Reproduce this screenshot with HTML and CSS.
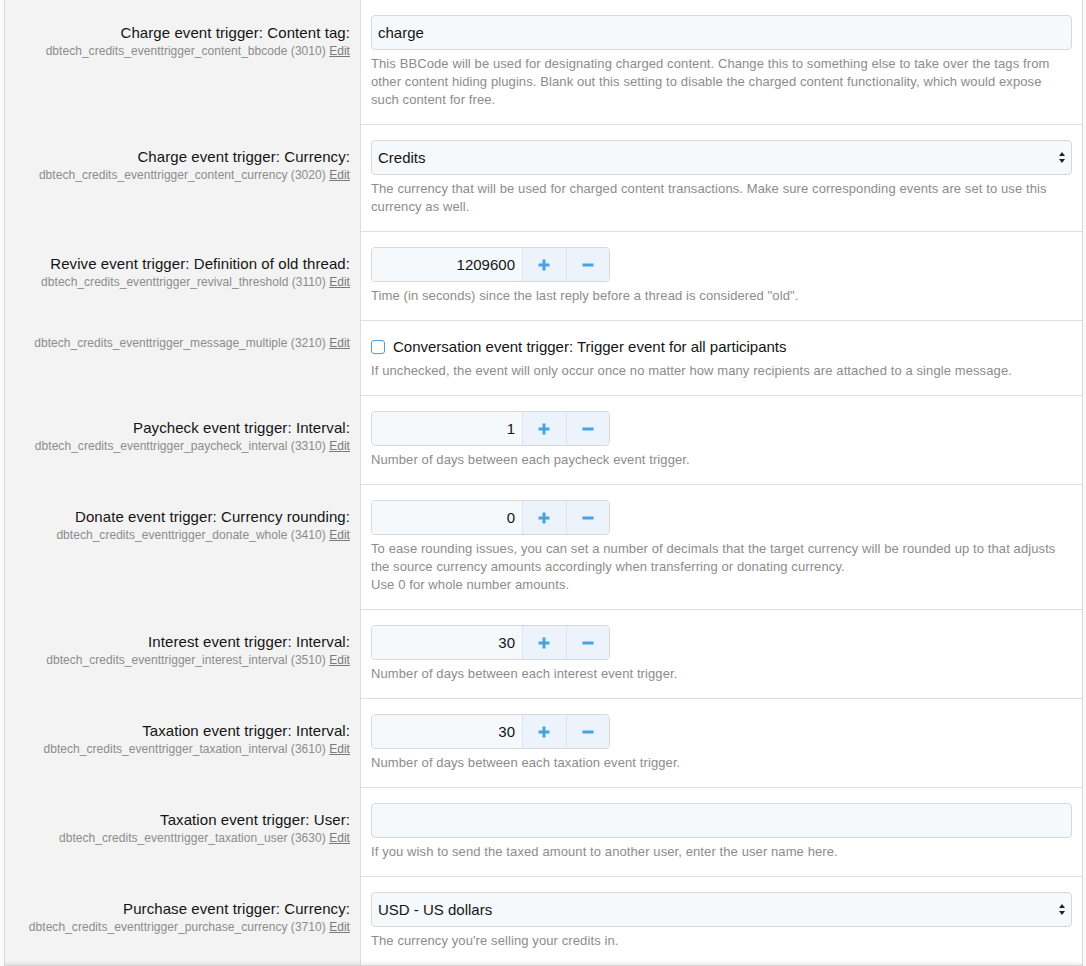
FILE: index.html
```html
<!DOCTYPE html>
<html>
<head>
<meta charset="utf-8">
<link rel="stylesheet" href="styles.css">
</head>
<body>
<div class="page">
  <div class="row first">
    <div class="dt"><div class="title">Charge event trigger: Content tag:</div><div class="hint">dbtech_credits_eventtrigger_content_bbcode (3010) <a class="edit">Edit</a></div></div>
    <div class="dd">
      <input class="input" type="text" value="charge">
      <div class="desc">This BBCode will be used for designating charged content. Change this to something else to take over the tags from other content hiding plugins. Blank out this setting to disable the charged content functionality, which would expose such content for free.</div>
    </div>
  </div>
  <div class="row">
    <div class="dt"><div class="title">Charge event trigger: Currency:</div><div class="hint">dbtech_credits_eventtrigger_content_currency (3020) <a class="edit">Edit</a></div></div>
    <div class="dd">
      <div class="select"><span>Credits</span><svg class="arrows" width="6" height="11" viewBox="0 0 6 11"><path d="M3 0L6 4H0Z M3 11L0 7H6Z" fill="#222"/></svg></div>
      <div class="desc">The currency that will be used for charged content transactions. Make sure corresponding events are set to use this currency as well.</div>
    </div>
  </div>
  <div class="row">
    <div class="dt"><div class="title">Revive event trigger: Definition of old thread:</div><div class="hint">dbtech_credits_eventtrigger_revival_threshold (3110) <a class="edit">Edit</a></div></div>
    <div class="dd">
      <div class="number"><input class="num-input" type="text" value="1209600"><span class="btn"><svg width="12" height="12" viewBox="0 0 12 12"><path d="M6 0.5V11.5M0.5 6H11.5" stroke="#47a2e4" stroke-width="3"/></svg></span><span class="btn"><svg width="12" height="12" viewBox="0 0 12 12"><path d="M0.5 6H11.5" stroke="#47a2e4" stroke-width="3"/></svg></span></div>
      <div class="desc">Time (in seconds) since the last reply before a thread is considered "old".</div>
    </div>
  </div>
  <div class="row">
    <div class="dt no-title"><div class="hint">dbtech_credits_eventtrigger_message_multiple (3210) <a class="edit">Edit</a></div></div>
    <div class="dd">
      <label class="check"><span class="box"></span><span>Conversation event trigger: Trigger event for all participants</span></label>
      <div class="desc">If unchecked, the event will only occur once no matter how many recipients are attached to a single message.</div>
    </div>
  </div>
  <div class="row">
    <div class="dt"><div class="title">Paycheck event trigger: Interval:</div><div class="hint">dbtech_credits_eventtrigger_paycheck_interval (3310) <a class="edit">Edit</a></div></div>
    <div class="dd">
      <div class="number"><input class="num-input" type="text" value="1"><span class="btn"><svg width="12" height="12" viewBox="0 0 12 12"><path d="M6 0.5V11.5M0.5 6H11.5" stroke="#47a2e4" stroke-width="3"/></svg></span><span class="btn"><svg width="12" height="12" viewBox="0 0 12 12"><path d="M0.5 6H11.5" stroke="#47a2e4" stroke-width="3"/></svg></span></div>
      <div class="desc">Number of days between each paycheck event trigger.</div>
    </div>
  </div>
  <div class="row">
    <div class="dt"><div class="title">Donate event trigger: Currency rounding:</div><div class="hint">dbtech_credits_eventtrigger_donate_whole (3410) <a class="edit">Edit</a></div></div>
    <div class="dd">
      <div class="number"><input class="num-input" type="text" value="0"><span class="btn"><svg width="12" height="12" viewBox="0 0 12 12"><path d="M6 0.5V11.5M0.5 6H11.5" stroke="#47a2e4" stroke-width="3"/></svg></span><span class="btn"><svg width="12" height="12" viewBox="0 0 12 12"><path d="M0.5 6H11.5" stroke="#47a2e4" stroke-width="3"/></svg></span></div>
      <div class="desc">To ease rounding issues, you can set a number of decimals that the target currency will be rounded up to that adjusts the source currency amounts accordingly when transferring or donating currency.<br>Use 0 for whole number amounts.</div>
    </div>
  </div>
  <div class="row">
    <div class="dt"><div class="title">Interest event trigger: Interval:</div><div class="hint">dbtech_credits_eventtrigger_interest_interval (3510) <a class="edit">Edit</a></div></div>
    <div class="dd">
      <div class="number"><input class="num-input" type="text" value="30"><span class="btn"><svg width="12" height="12" viewBox="0 0 12 12"><path d="M6 0.5V11.5M0.5 6H11.5" stroke="#47a2e4" stroke-width="3"/></svg></span><span class="btn"><svg width="12" height="12" viewBox="0 0 12 12"><path d="M0.5 6H11.5" stroke="#47a2e4" stroke-width="3"/></svg></span></div>
      <div class="desc">Number of days between each interest event trigger.</div>
    </div>
  </div>
  <div class="row">
    <div class="dt"><div class="title">Taxation event trigger: Interval:</div><div class="hint">dbtech_credits_eventtrigger_taxation_interval (3610) <a class="edit">Edit</a></div></div>
    <div class="dd">
      <div class="number"><input class="num-input" type="text" value="30"><span class="btn"><svg width="12" height="12" viewBox="0 0 12 12"><path d="M6 0.5V11.5M0.5 6H11.5" stroke="#47a2e4" stroke-width="3"/></svg></span><span class="btn"><svg width="12" height="12" viewBox="0 0 12 12"><path d="M0.5 6H11.5" stroke="#47a2e4" stroke-width="3"/></svg></span></div>
      <div class="desc">Number of days between each taxation event trigger.</div>
    </div>
  </div>
  <div class="row">
    <div class="dt"><div class="title">Taxation event trigger: User:</div><div class="hint">dbtech_credits_eventtrigger_taxation_user (3630) <a class="edit">Edit</a></div></div>
    <div class="dd">
      <input class="input" type="text" value="">
      <div class="desc">If you wish to send the taxed amount to another user, enter the user name here.</div>
    </div>
  </div>
  <div class="row">
    <div class="dt"><div class="title">Purchase event trigger: Currency:</div><div class="hint">dbtech_credits_eventtrigger_purchase_currency (3710) <a class="edit">Edit</a></div></div>
    <div class="dd">
      <div class="select"><span>USD - US dollars</span><svg class="arrows" width="6" height="11" viewBox="0 0 6 11"><path d="M3 0L6 4H0Z M3 11L0 7H6Z" fill="#222"/></svg></div>
      <div class="desc">The currency you're selling your credits in.</div>
    </div>
  </div>
  <div class="footer"></div>
</div>
</body>
</html>
```
FILE: styles.css
```css
* { box-sizing: border-box; }
html, body { margin: 0; padding: 0; }
body {
  background: #fafafa;
  font-family: "Liberation Sans", Arial, sans-serif;
  color: #141414;
  height: 966px;
  overflow: hidden;
}
.page {
  margin-left: 4px;
  width: 1079px;
  border-left: 1px solid #d8d8d8;
  border-right: 1px solid #d8d8d8;
  background: #fff;
}
.row {
  display: grid;
  grid-template-columns: 356px 1fr;
}
.dt {
  background: #f3f3f3;
  border-right: 1px solid #dedede;
  padding: 24px 10px 0 10px;
  text-align: right;
}
.dt.no-title { padding-top: 14px; }
.title {
  font-size: 15px;
  line-height: 18px;
  color: #141414;
  letter-spacing: 0.08px;
}
.hint {
  font-size: 12px;
  line-height: 18px;
  color: #8c8c8c;
  letter-spacing: 0.04px;
}
.edit {
  color: #7a7a7a;
  text-decoration: underline;
}
.dd {
  border-top: 1px solid #dedede;
  padding: 15px 10px 15px 10px;
}
.row.first .dd { border-top: none; }
.input {
  display: block;
  width: 100%;
  height: 35px;
  border: 1px solid #d8d8d8;
  border-radius: 4px;
  background: #f6f9fc;
  font-family: "Liberation Sans", Arial, sans-serif;
  font-size: 15px;
  color: #141414;
  padding: 0 6px;
  outline: none;
}
.select {
  display: flex;
  align-items: center;
  justify-content: space-between;
  height: 35px;
  border: 1px solid #d8d8d8;
  border-radius: 4px;
  background: #f6f9fc;
  font-size: 15px;
  color: #141414;
  padding: 0 6px;
}
.number {
  display: flex;
  width: 239px;
  height: 35px;
  border: 1px solid #d8d8d8;
  border-radius: 4px;
  overflow: hidden;
  background: #f6f9fc;
}
.num-input {
  width: 150px;
  border: none;
  background: #f6f9fc;
  font-family: "Liberation Sans", Arial, sans-serif;
  font-size: 15px;
  color: #141414;
  text-align: right;
  padding: 0 7px 0 0;
  outline: none;
}
.btn {
  flex: 1;
  display: flex;
  align-items: center;
  justify-content: center;
  background: #ecf3fb;
  border-left: 1px solid #dde4ec;
}
.check {
  display: flex;
  align-items: center;
  gap: 8px;
  height: 21px;
  font-size: 15px;
  color: #141414;
}
.box {
  width: 14px;
  height: 14px;
  border: 1px solid #4a9fe0;
  border-radius: 3px;
  background: #fff;
}
.desc {
  margin-top: 5px;
  font-size: 13px;
  line-height: 18px;
  color: #8c8c8c;
  letter-spacing: 0.1px;
}
.footer {
  height: 20px;
  background: #edf4fb;
  border-top: 1px solid #d5d5d5;
  box-shadow: 0 -2px 3px rgba(0,0,0,0.08);
  position: relative;
}
```
